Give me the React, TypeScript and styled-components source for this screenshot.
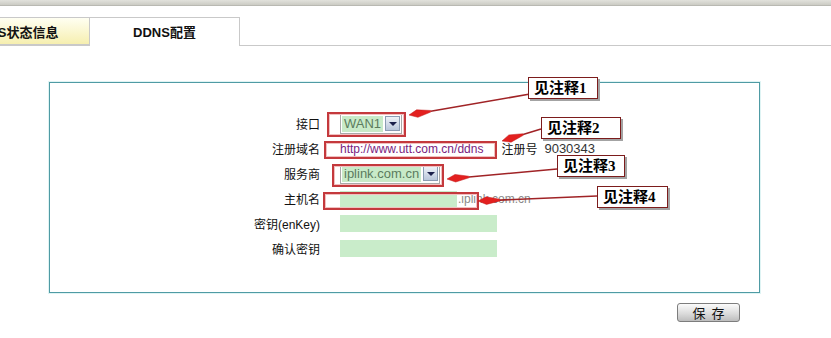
import React from "react";
import styled, { createGlobalStyle } from "styled-components";

const GlobalStyle = createGlobalStyle`
  html, body { margin: 0; padding: 0; background: #ffffff; }
  body { font-family: "Liberation Sans", "Noto Sans CJK SC", sans-serif; font-size: 12px; color: #000; }
  * { box-sizing: border-box; }
`;

const Page = styled.div`
  position: relative;
  width: 831px;
  height: 338px;
  overflow: hidden;
  background: #fff;
`;

const TopBar = styled.div`
  height: 6px;
  background: linear-gradient(#e2e2dc, #cbcbc4);
  border-bottom: 1px solid #b9b9b2;
`;

const TabRow = styled.div`
  display: flex;
  align-items: flex-start;
  margin-top: 11px;
  height: 29px;
  border-bottom: 1px solid #c9c9c9;
`;

const Tab = styled.div<{ $active?: boolean; $offset?: number; $w: number }>`
  width: ${(p) => p.$w}px;
  margin-left: ${(p) => p.$offset ?? 0}px;
  height: ${(p) => (p.$active ? 29 : 28)}px;
  display: flex;
  align-items: center;
  justify-content: center;
  font-size: 13px;
  font-weight: bold;
  color: #111;
  white-space: nowrap;
  border-top: 1px solid #c9c9c9;
  border-right: 1px solid #c9c9c9;
  border-bottom: ${(p) => (p.$active ? "none" : "1px solid #c9c9c9")};
  background: ${(p) => (p.$active ? "#ffffff" : "linear-gradient(#fffff2, #f6efb0)")};
  padding-bottom: ${(p) => (p.$active ? 1 : 0)}px;
`;

const Panel = styled.div`
  margin: 36px 0 0 49px;
  width: 711px;
  height: 211px;
  border: 1px solid #4f9ba4;
  box-shadow: 0 0 0 1px #dff4f4;
  padding-top: 28px;
`;

const Form = styled.div`
  display: grid;
  grid-template-columns: 270px auto;
  column-gap: 20px;
  grid-auto-rows: 25px;
  align-items: center;
`;

const Label = styled.div`
  text-align: right;
  font-size: 12px;
  color: #111;
  white-space: nowrap;
`;

const Field = styled.div`
  display: flex;
  align-items: center;
  white-space: nowrap;
`;

const Select = styled.div`
  display: inline-flex;
  align-items: center;
  height: 20px;
  padding: 1px;
  gap: 2px;
  border: 1px solid #a9a9a9;
  background: #fff;
`;

const SelectValue = styled.span`
  background: #c8eac8;
  color: #5b7b5d;
  font-size: 13px;
  line-height: 16px;
  padding: 0 2px;
`;

const SelectButton = styled.span`
  width: 15px;
  height: 15px;
  border: 1px solid #8b9cb4;
  background: linear-gradient(#eef2f8, #b9c6da);
  display: flex;
  align-items: center;
  justify-content: center;
  &::after {
    content: "";
    border-left: 4px solid transparent;
    border-right: 4px solid transparent;
    border-top: 4px solid #1b1f4a;
    margin-top: 1px;
  }
`;

const UrlText = styled.span`
  color: #7a2280;
  font-size: 12px;
`;

const RegLabel = styled.span`
  margin-left: 18px;
  font-size: 12px;
  color: #111;
`;

const RegNumber = styled.span`
  margin-left: 7px;
  font-size: 13px;
  color: #333;
`;

const GreenInput = styled.div<{ $w: number; $h: number }>`
  width: ${(p) => p.$w}px;
  height: ${(p) => p.$h}px;
  background: #c9ecca;
`;

const Suffix = styled.span`
  margin-left: 1px;
  font-size: 12px;
  color: #8a8a8a;
`;

const Footer = styled.div`
  display: flex;
  justify-content: flex-start;
  padding: 10px 0 0 677px;
`;

const SaveButton = styled.button`
  width: 63px;
  height: 19px;
  padding: 0;
  border: 1px solid #7d7d7d;
  border-radius: 3px;
  background: linear-gradient(#fbfbfb, #dcdcdc 55%, #bdbdbd);
  font-family: "Noto Sans CJK SC", sans-serif;
  font-size: 13px;
  line-height: 17px;
  color: #111;
  letter-spacing: 6px;
  text-indent: 6px;
`;

const Highlight = styled.div`
  position: absolute;
  border: 2px solid #c4393d;
  box-shadow: inset 0 0 0 1px #f1c0c0;
  pointer-events: none;
`;

const Callout = styled.div`
  position: absolute;
  height: 22px;
  background: #fff;
  border: 1px solid #7c1c1c;
  box-shadow: 2px 2px 0 #a3a3a3;
  font-family: "Liberation Serif", "Noto Sans CJK SC", serif;
  font-weight: bold;
  font-size: 15px;
  line-height: 20px;
  padding-left: 5px;
  color: #000;
  white-space: nowrap;
`;

const Overlay = styled.svg`
  position: absolute;
  left: 0;
  top: 0;
  pointer-events: none;
`;

type Pt = [number, number];
const arrows: { from: Pt; to: Pt }[] = [
  { from: [530, 94], to: [409, 115] },
  { from: [541, 129], to: [502, 141] },
  { from: [557, 169], to: [447, 179] },
  { from: [597, 196], to: [478, 201] },
];

const highlights = [
  { x: 327, y: 112, w: 79, h: 25 },
  { x: 324, y: 141, w: 173, h: 18 },
  { x: 332, y: 164, w: 112, h: 23 },
  { x: 323, y: 192, w: 156, h: 18 },
];

const callouts = [
  { x: 528, y: 77, w: 70, text: "见注释1" },
  { x: 541, y: 117, w: 80, text: "见注释2" },
  { x: 557, y: 155, w: 68, text: "见注释3" },
  { x: 597, y: 186, w: 71, text: "见注释4" },
];

function Arrow({ from, to }: { from: Pt; to: Pt }) {
  const dx = from[0] - to[0];
  const dy = from[1] - to[1];
  const len = Math.hypot(dx, dy);
  const ux = dx / len;
  const uy = dy / len;
  const L = 22;
  const W = 3.8;
  const bx = to[0] + ux * L;
  const by = to[1] + uy * L;
  const mx = to[0] + ux * L * 0.38;
  const my = to[1] + uy * L * 0.38;
  const px = -uy;
  const py = ux;
  const pts = [
    `${to[0]},${to[1]}`,
    `${mx + px * W},${my + py * W}`,
    `${bx + px * 0.8},${by + py * 0.8}`,
    `${bx - px * 0.8},${by - py * 0.8}`,
    `${mx - px * W},${my - py * W}`,
  ].join(" ");
  return (
    <g>
      <line x1={from[0]} y1={from[1]} x2={bx} y2={by} stroke="#a02326" strokeWidth={1.6} />
      <polygon points={pts} fill="#e3201f" stroke="#c01818" strokeWidth={0.5} />
    </g>
  );
}

export default function App() {
  return (
    <>
      <GlobalStyle />
      <Page>
        <TopBar />
        <TabRow>
          <Tab $w={151} $offset={-61}>DDNS状态信息</Tab>
          <Tab $w={150} $active>DDNS配置</Tab>
        </TabRow>
        <Panel>
          <Form>
            <Label>接口</Label>
            <Field>
              <Select>
                <SelectValue>WAN1</SelectValue>
                <SelectButton />
              </Select>
            </Field>

            <Label>注册域名</Label>
            <Field>
              <UrlText>http://www.utt.com.cn/ddns</UrlText>
              <RegLabel>注册号</RegLabel>
              <RegNumber>9030343</RegNumber>
            </Field>

            <Label>服务商</Label>
            <Field>
              <Select>
                <SelectValue>iplink.com.cn</SelectValue>
                <SelectButton />
              </Select>
            </Field>

            <Label>主机名</Label>
            <Field>
              <GreenInput $w={117} $h={16} />
              <Suffix>.iplink.com.cn</Suffix>
            </Field>

            <Label>密钥(enKey)</Label>
            <Field>
              <GreenInput $w={157} $h={17} />
            </Field>

            <Label>确认密钥</Label>
            <Field>
              <GreenInput $w={157} $h={17} />
            </Field>
          </Form>
        </Panel>
        <Footer>
          <SaveButton>保存</SaveButton>
        </Footer>

        {highlights.map((h, i) => (
          <Highlight key={i} style={{ left: h.x, top: h.y, width: h.w, height: h.h }} />
        ))}
        <Overlay width={831} height={338}>
          {arrows.map((a, i) => (
            <Arrow key={i} from={a.from} to={a.to} />
          ))}
        </Overlay>
        {callouts.map((c, i) => (
          <Callout key={i} style={{ left: c.x, top: c.y, width: c.w }}>
            {c.text}
          </Callout>
        ))}
      </Page>
    </>
  );
}
